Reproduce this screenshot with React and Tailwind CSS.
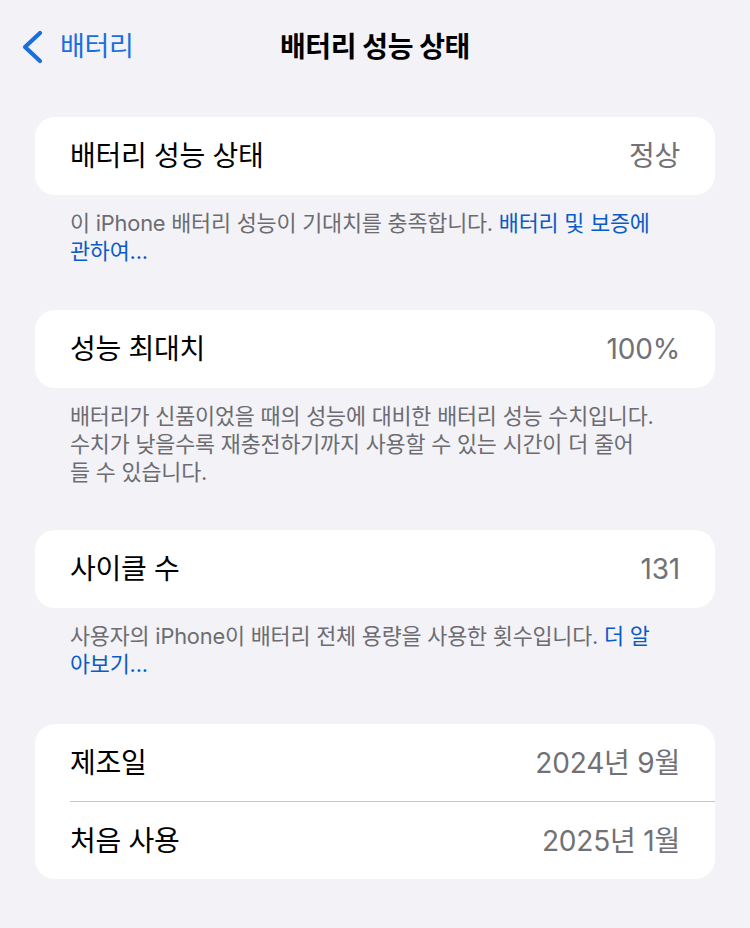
import React from "react";

const FONT = { fontFamily: '"Inter", "Noto Sans CJK KR", sans-serif' };

function Row({ label, value, h = "h-[78px]" }) {
  return (
    <div className={`flex ${h} items-center justify-between pl-[35px] pr-[35px]`}>
      <span className="text-[28px] text-black tracking-[-0.3px]">{label}</span>
      <span className="text-[28px] text-[#717176] tracking-[-0.2px]">{value}</span>
    </div>
  );
}

function Card({ children }) {
  return <div className="overflow-hidden rounded-[20px] bg-white">{children}</div>;
}

function Footer({ children }) {
  return (
    <div className="pl-[35px] pt-[14px] text-[21.8px] leading-[28px] text-[#6c6c71] tracking-[-0.2px] whitespace-nowrap">
      {children}
    </div>
  );
}

function Link({ children }) {
  return <span className="text-[#0b5bc6]">{children}</span>;
}

export default function App() {
  return (
    <div className="min-h-[928px] w-[750px] bg-[#f2f2f7]" style={FONT}>
      <div className="grid h-[94px] grid-cols-[1fr_auto_1fr] items-center">
        <div className="flex items-center gap-[14px] pl-[20px]">
          <svg width="26" height="34" viewBox="0 0 26 34" fill="none">
            <polyline
              points="20,3 5,17 20,31"
              stroke="#1a6ee0"
              strokeWidth="4.2"
              strokeLinecap="round"
              strokeLinejoin="round"
            />
          </svg>
          <span className="text-[27px] text-[#1a6ee0] tracking-[-0.3px]">배터리</span>
        </div>
        <div className="text-[28px] font-bold text-black tracking-[-0.4px]">배터리 성능 상태</div>
        <div />
      </div>

      <div className="px-[35px] pt-[23px]">
        <Card>
          <Row label="배터리 성능 상태" value="정상" />
        </Card>
        <Footer>
          이 iPhone 배터리 성능이 기대치를 충족합니다. <Link>배터리 및 보증에</Link>
          <br />
          <Link>관하여...</Link>
        </Footer>

        <div className="mt-[45px]">
          <Card>
            <Row label="성능 최대치" value="100%" />
          </Card>
          <Footer>
            배터리가 신품이었을 때의 성능에 대비한 배터리 성능 수치입니다.
            <br />
            수치가 낮을수록 재충전하기까지 사용할 수 있는 시간이 더 줄어
            <br />
            들 수 있습니다.
          </Footer>
        </div>

        <div className="mt-[44px]">
          <Card>
            <Row label="사이클 수" value="131" />
          </Card>
          <Footer>
            사용자의 iPhone이 배터리 전체 용량을 사용한 횟수입니다. <Link>더 알</Link>
            <br />
            <Link>아보기...</Link>
          </Footer>
        </div>

        <div className="mt-[46px]">
          <Card>
            <Row label="제조일" value="2024년 9월" h="h-[77px]" />
            <div className="ml-[35px] h-px bg-[#c6c6c8]" />
            <Row label="처음 사용" value="2025년 1월" h="h-[77px]" />
          </Card>
        </div>
      </div>
    </div>
  );
}
